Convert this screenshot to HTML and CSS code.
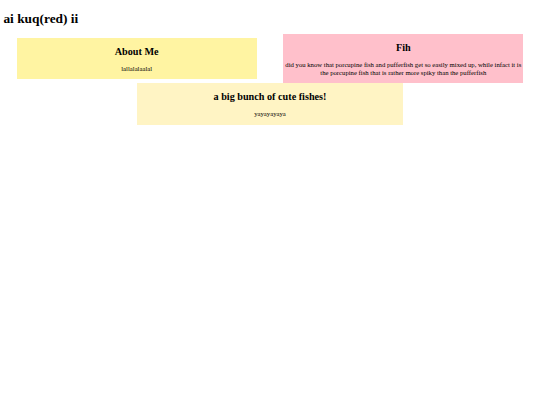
FILE: index.html
```html
<!DOCTYPE html>
<html>
<head>
<meta charset="utf-8">
<link rel="stylesheet" href="styles.css">
</head>
<body>
<h1 class="title">ai kuq(red) ii</h1>
<div class="cards">
  <div class="card card-about">
    <h2 class="card-title">About Me</h2>
    <p class="card-text">lallalalaalal</p>
  </div>
  <div class="card card-fish">
    <h2 class="card-title">Fih</h2>
    <p class="card-text">did you know that porcupine fish and pufferfish get so easily mixed up, while infact it is the porcupine fish that is rather more spiky than the pufferfish</p>
  </div>
  <div class="card card-bunch">
    <h2 class="card-title">a big bunch of cute fishes!</h2>
    <p class="card-text">yayayayaya</p>
  </div>
</div>
</body>
</html>
```
FILE: styles.css
```css
html, body {
  background: #ffffff;
}
body {
  margin: 3.4px;
  font-family: "Liberation Serif", "Times New Roman", serif;
  font-size: 6.7px;
  color: #000;
}
.title {
  font-size: 13.4px;
  font-weight: bold;
  margin: 8px 0 6.7px;
}
.cards {
  display: flex;
  flex-wrap: wrap;
  justify-content: space-around;
  align-items: center;
}
.card {
  width: 45%;
  text-align: center;
}
.card-title {
  font-size: 10.2px;
  font-weight: bold;
  margin: 8px 0;
}
.card-text {
  margin: 6.3px 0;
  line-height: 7.7px;
}
.card-about {
  background: #fff4a2;
}
.card-fish {
  background: #ffc0cb;
}
.card-bunch {
  width: 50%;
  background: #fff4c4;
}
.card-bunch .card-text {
  margin-bottom: 7.5px;
}
```
